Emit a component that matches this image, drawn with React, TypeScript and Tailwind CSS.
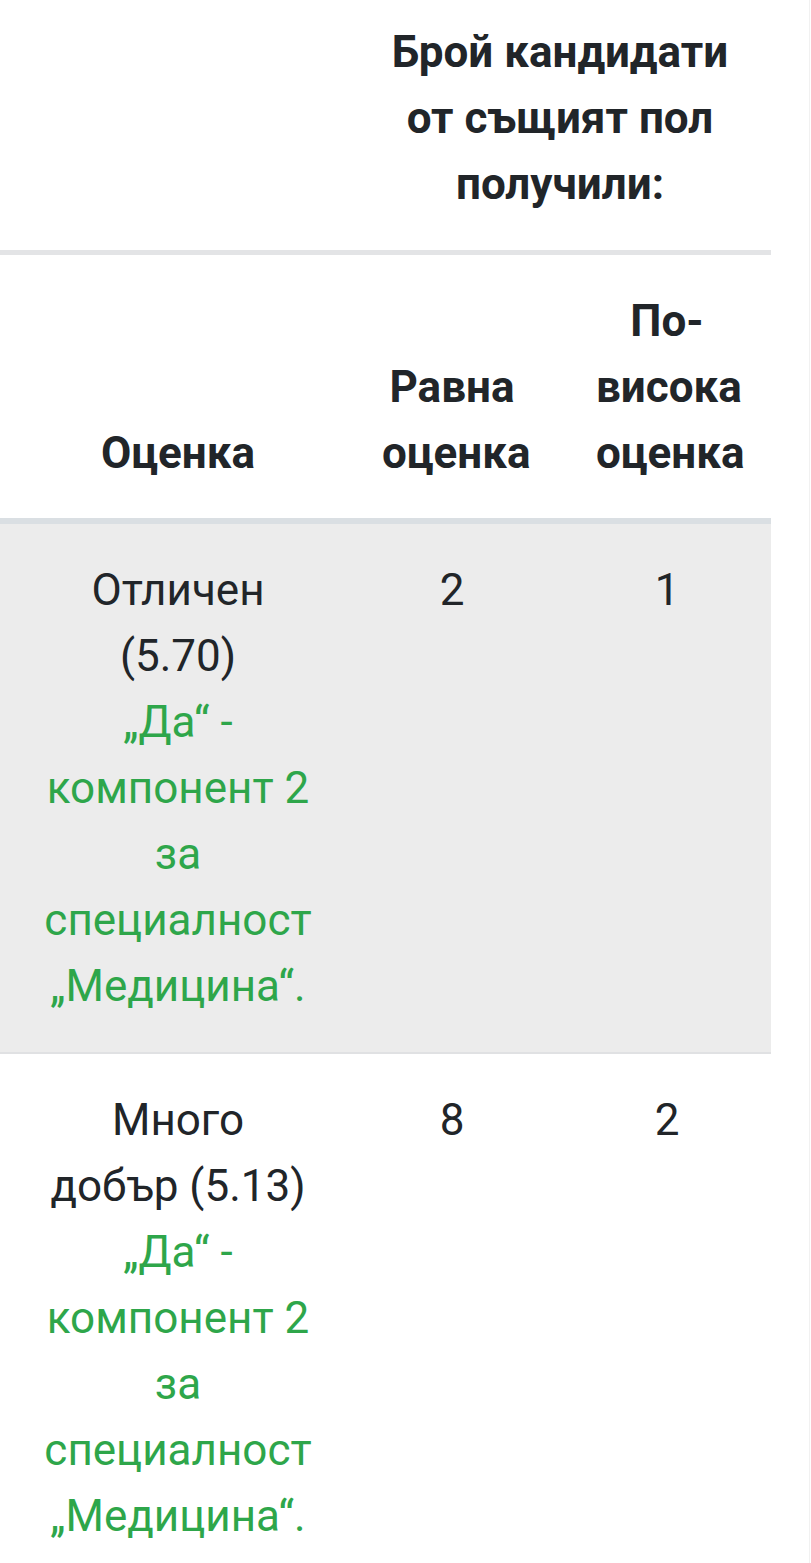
import React from 'react';

interface GradeRow {
  label: string[];
  equal: number;
  higher: number;
  striped: boolean;
}

const rows: GradeRow[] = [
  { label: ['Отличен', '(5.70)'], equal: 2, higher: 1, striped: true },
  { label: ['Много', 'добър (5.13)'], equal: 8, higher: 2, striped: false },
];

const note = ['„Да“ -', 'компонент 2', 'за', 'специалност', '„Медицина“.'];

const Lines: React.FC<{ lines: string[] }> = ({ lines }) => (
  <>
    {lines.map((l, i) => (
      <span key={i} className="block whitespace-nowrap">
        {l}
      </span>
    ))}
  </>
);

export default function App() {
  return (
    <div className="w-[810px] min-h-screen bg-white border-r border-[#f1f1f1] overflow-hidden">
      <table
        className="w-[771px] -mt-[14px] table-fixed border-collapse text-center text-[44px] leading-[66px] text-[#212529]"
        style={{ fontFamily: 'Roboto, "Noto Sans", sans-serif' }}
      >
        <colgroup>
          <col className="w-[356px]" />
          <col className="w-[207px]" />
          <col className="w-[208px]" />
        </colgroup>
        <thead>
          <tr className="border-b-[5px] border-[#e3e4e6]">
            <th className="px-[33px] py-[33px]" />
            <th colSpan={2} className="pl-[26px] pr-[33px] py-[33px] align-bottom font-bold">
              <Lines lines={['Брой кандидати', 'от същият пол', 'получили:']} />
            </th>
          </tr>
          <tr className="border-b-[6px] border-[#dadfe3]">
            <th className="px-[33px] pt-[33px] pb-[32px] align-bottom font-bold">Оценка</th>
            <th className="pl-[26px] pr-[41px] pt-[33px] pb-[32px] align-bottom font-bold">
              <Lines lines={['Равна', 'оценка']} />
            </th>
            <th className="px-[33px] pt-[33px] pb-[32px] align-bottom font-bold">
              <Lines lines={['По-', 'висока', 'оценка']} />
            </th>
          </tr>
        </thead>
        <tbody>
          {rows.map((r, i) => (
            <tr
              key={i}
              className={r.striped ? 'bg-[#ececec] border-b-[2px] border-[#e0e1e3]' : 'bg-white'}
            >
              <td className="px-[33px] py-[33px] align-top">
                <Lines lines={r.label} />
                <span className="block text-[#2ea64a]">
                  <Lines lines={note} />
                </span>
              </td>
              <td className="pl-[26px] pr-[41px] py-[33px] align-top">{r.equal}</td>
              <td className="px-[33px] py-[33px] align-top">{r.higher}</td>
            </tr>
          ))}
        </tbody>
      </table>
    </div>
  );
}
